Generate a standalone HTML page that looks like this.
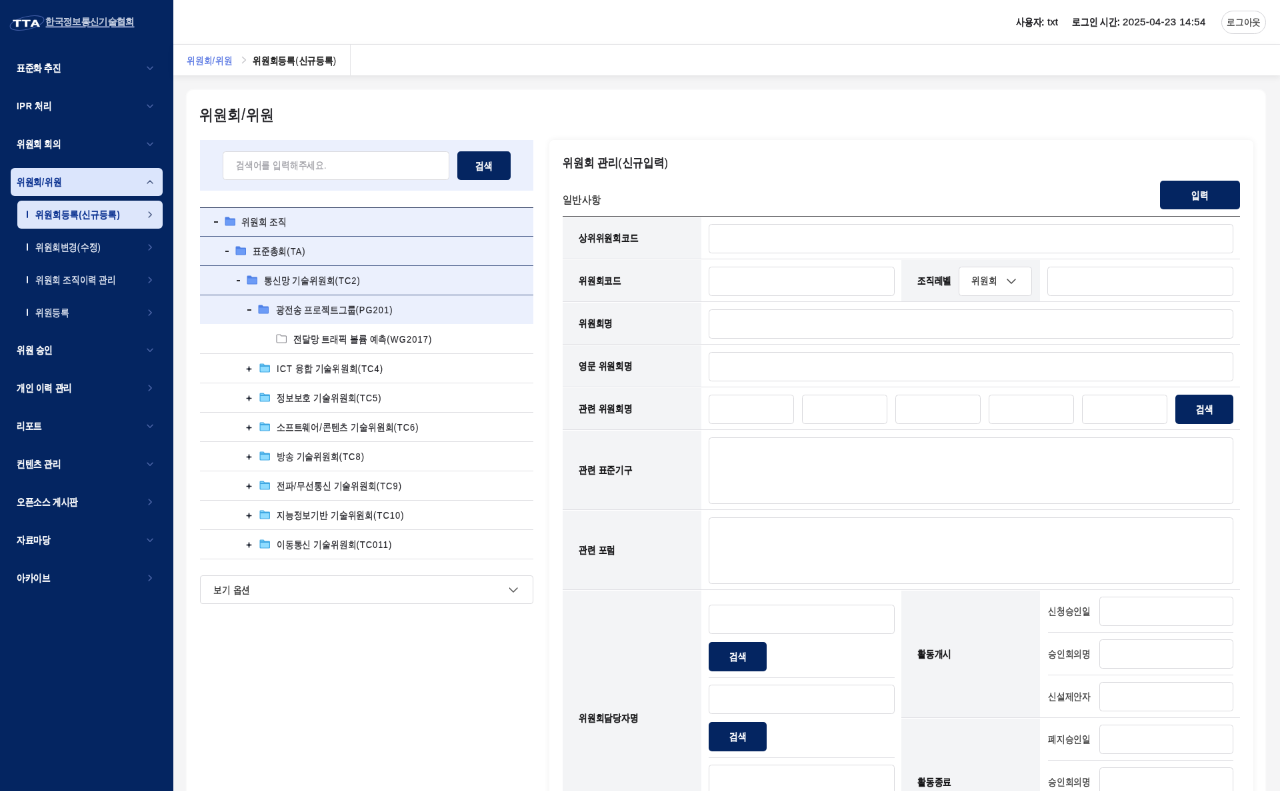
<!DOCTYPE html>
<html lang="ko">
<head>
<meta charset="utf-8">
<title>위원회/위원</title>
<style>
*{box-sizing:border-box;margin:0;padding:0}
html,body{width:1280px;height:791px;overflow:hidden;background:#f5f5f6}
body{font-family:"Liberation Sans",sans-serif;color:#1b1b1f;line-height:1}
i{font-style:normal;letter-spacing:1.3px;word-spacing:0;-webkit-text-stroke:.15px}
.mi i,.si.on i,.lb i{font-weight:bold;-webkit-text-stroke:0;letter-spacing:.9px}
#stage{will-change:transform;position:absolute;left:0;top:0;width:1920px;height:1187px;transform:scale(.666667);transform-origin:0 0;overflow:hidden;background:#f5f5f6;letter-spacing:0;word-spacing:.5px;font-size:15px;white-space:nowrap;-webkit-text-stroke:.3px}
#stage div,#stage span{position:absolute}
#stage span{display:block;white-space:nowrap;transform:scaleX(var(--sx,.855));transform-origin:0 0}
.k{display:inline-block;font-weight:inherit;transform:scaleX(var(--sx,.855));transform-origin:0 50%}
.btn .k,.pill .k{transform-origin:50% 50%}
#side{left:0;top:0;width:260px;height:1187px;background:#042561;color:#fff}
.mi{letter-spacing:-.3px;left:16px;width:228px;height:42px;border-radius:6px;line-height:42px;padding-left:9px;font-weight:normal;-webkit-text-stroke:.8px;font-size:15px;color:#fff}
.mi.on{background:#dbe5fc;color:#0c3391}
.mi svg,.si svg{position:absolute;right:13px;top:15px}
.si{letter-spacing:-.3px;left:26px;width:218px;height:42px;border-radius:6px;line-height:42px;padding-left:27px;font-size:15px;color:#eef2fb}
.si.on{background:#dde6fb;color:#0c3391;letter-spacing:.26px;font-weight:normal;-webkit-text-stroke:.8px}
.si:before{content:"";position:absolute;left:14.2px;top:15.5px;width:2px;height:11px;background:currentColor;border-radius:1px}
#top{left:260px;top:0;width:1660px;height:67px;background:#fff;border-bottom:1px solid #e4e4e7}
#crumb{left:260px;top:67px;width:1660px;height:46px;background:#fff;box-shadow:0 3px 9px rgba(0,0,0,.075)}
#crumb .tab{left:0;top:0;width:266px;height:46px;border-right:1px solid #e4e4e7}
#card{left:280px;top:135px;width:1617.5px;height:1100px;background:#fff;border-radius:10px;box-shadow:0 0 0 1.5px rgba(255,255,255,.55),0 1px 4px rgba(0,0,0,.04)}
.btn{background:#042561;color:#fff;font-weight:normal;-webkit-text-stroke:.8px;border-radius:5px;text-align:center;font-size:15px;text-indent:0}
.inp{background:#fff;border:1.4px solid #d9d9dd;border-radius:4.5px}
.tr{left:300px;width:500px;height:44px;border-bottom:1.2px solid #dedee2}
.tr.hl{background:#ebf0fd;border-bottom:1.5px solid #4b5f8c}
.tt{font-size:15px;line-height:44px;height:44px;top:0;color:#1f1f24}
#form{left:824px;top:210px;width:1056px;height:1000px;background:#fff;border-radius:7px;box-shadow:0 0 10px rgba(0,0,0,.07)}
.lc{background:#f3f4f6}
.lb{font-weight:normal;-webkit-text-stroke:.85px;font-size:14.5px;color:#141416}
.hr{height:1.3px;background:#e0e0e4}
</style>
</head>
<body>
<div id="stage">
<div id="side">
<svg style="position:absolute;left:0;top:0" width="260" height="66" viewBox="0 0 260 66"><ellipse cx="40.5" cy="34.5" rx="26" ry="9.5" fill="none" stroke="#3f5ba3" stroke-width="1.15" transform="rotate(-13 40.5 34.5)"/><g font-family="Liberation Sans, sans-serif" font-weight="bold" font-size="14" fill="#fff" stroke="#fff" stroke-width="0.5"><text x="19.5" y="39.8" textLength="12.5" lengthAdjust="spacingAndGlyphs">T</text><text x="33" y="39.8" textLength="12.5" lengthAdjust="spacingAndGlyphs">T</text><text x="45.5" y="39.8" textLength="14.5" lengthAdjust="spacingAndGlyphs">A</text></g><text x="68.5" y="37" font-family="Liberation Sans, sans-serif" font-size="13.5" fill="#dfe6f8" fill-opacity=".15" stroke="#eef2fc" stroke-width="0.62" textLength="133" lengthAdjust="spacingAndGlyphs">한국정보통신기술협회</text><rect x="68.5" y="39" width="60" height="2.6" fill="#b4c0e2" opacity=".6"/><rect x="131" y="39" width="33.5" height="2.6" fill="#b4c0e2" opacity=".6"/><rect x="167" y="39" width="34.5" height="2.6" fill="#b4c0e2" opacity=".6"/></svg>
<div class="mi" style="top:81px"><b class="k">표준화 추진</b><svg width="12" height="12" viewBox="0 0 12 12"><path d="M2 4.2 L6 8.2 L10 4.2" fill="none" stroke="#4d66a8" stroke-width="1.5" stroke-linecap="round" stroke-linejoin="round"/></svg></div>
<div class="mi" style="top:138px"><b class="k"><i>IPR</i> 처리</b><svg width="12" height="12" viewBox="0 0 12 12"><path d="M2 4.2 L6 8.2 L10 4.2" fill="none" stroke="#4d66a8" stroke-width="1.5" stroke-linecap="round" stroke-linejoin="round"/></svg></div>
<div class="mi" style="top:195px"><b class="k">위원회 회의</b><svg width="12" height="12" viewBox="0 0 12 12"><path d="M2 4.2 L6 8.2 L10 4.2" fill="none" stroke="#4d66a8" stroke-width="1.5" stroke-linecap="round" stroke-linejoin="round"/></svg></div>
<div class="mi on" style="top:252px"><b class="k">위원회<i>/</i>위원</b><svg width="12" height="12" viewBox="0 0 12 12"><path d="M2 8 L6 4 L10 8" fill="none" stroke="#4a5b84" stroke-width="1.5" stroke-linecap="round" stroke-linejoin="round"/></svg></div>
<div class="mi" style="top:504px"><b class="k">위원 승인</b><svg width="12" height="12" viewBox="0 0 12 12"><path d="M2 4.2 L6 8.2 L10 4.2" fill="none" stroke="#4d66a8" stroke-width="1.5" stroke-linecap="round" stroke-linejoin="round"/></svg></div>
<div class="mi" style="top:561px"><b class="k">개인 이력 관리</b><svg width="12" height="12" viewBox="0 0 12 12"><path d="M4.2 2 L8.2 6 L4.2 10" fill="none" stroke="#4d66a8" stroke-width="1.5" stroke-linecap="round" stroke-linejoin="round"/></svg></div>
<div class="mi" style="top:618px"><b class="k">리포트</b><svg width="12" height="12" viewBox="0 0 12 12"><path d="M2 4.2 L6 8.2 L10 4.2" fill="none" stroke="#4d66a8" stroke-width="1.5" stroke-linecap="round" stroke-linejoin="round"/></svg></div>
<div class="mi" style="top:675px"><b class="k">컨텐츠 관리</b><svg width="12" height="12" viewBox="0 0 12 12"><path d="M2 4.2 L6 8.2 L10 4.2" fill="none" stroke="#4d66a8" stroke-width="1.5" stroke-linecap="round" stroke-linejoin="round"/></svg></div>
<div class="mi" style="top:732px"><b class="k">오픈소스 게시판</b><svg width="12" height="12" viewBox="0 0 12 12"><path d="M4.2 2 L8.2 6 L4.2 10" fill="none" stroke="#4d66a8" stroke-width="1.5" stroke-linecap="round" stroke-linejoin="round"/></svg></div>
<div class="mi" style="top:789px"><b class="k">자료마당</b><svg width="12" height="12" viewBox="0 0 12 12"><path d="M2 4.2 L6 8.2 L10 4.2" fill="none" stroke="#4d66a8" stroke-width="1.5" stroke-linecap="round" stroke-linejoin="round"/></svg></div>
<div class="mi" style="top:846px"><b class="k">아카이브</b><svg width="12" height="12" viewBox="0 0 12 12"><path d="M4.2 2 L8.2 6 L4.2 10" fill="none" stroke="#4d66a8" stroke-width="1.5" stroke-linecap="round" stroke-linejoin="round"/></svg></div>
<div class="si on" style="top:300.5px"><b class="k">위원회등록<i>(</i>신규등록<i>)</i></b><svg width="12" height="12" viewBox="0 0 12 12"><path d="M4.2 2 L8.2 6 L4.2 10" fill="none" stroke="#4a5b84" stroke-width="1.5" stroke-linecap="round" stroke-linejoin="round"/></svg></div>
<div class="si" style="top:349.5px"><b class="k">위원회변경<i>(</i>수정<i>)</i></b><svg width="12" height="12" viewBox="0 0 12 12"><path d="M4.2 2 L8.2 6 L4.2 10" fill="none" stroke="#4d66a8" stroke-width="1.5" stroke-linecap="round" stroke-linejoin="round"/></svg></div>
<div class="si" style="top:398.5px"><b class="k">위원회 조직이력 관리</b><svg width="12" height="12" viewBox="0 0 12 12"><path d="M4.2 2 L8.2 6 L4.2 10" fill="none" stroke="#4d66a8" stroke-width="1.5" stroke-linecap="round" stroke-linejoin="round"/></svg></div>
<div class="si" style="top:447.5px"><b class="k">위원등록</b><svg width="12" height="12" viewBox="0 0 12 12"><path d="M4.2 2 L8.2 6 L4.2 10" fill="none" stroke="#4d66a8" stroke-width="1.5" stroke-linecap="round" stroke-linejoin="round"/></svg></div>
</div>
<div id="top">
<span style="left:1263.5px;top:25px;font-size:15px;font-weight:normal;-webkit-text-stroke:.8px">사용자:</span>
<span style="left:1311px;top:25px;font-size:15px;letter-spacing:0;--sx:1">txt</span>
<span style="left:1348px;top:25px;font-size:15px;font-weight:normal;-webkit-text-stroke:.8px">로그인 시간:</span>
<span style="left:1424px;top:25px;font-size:15px;letter-spacing:.36px;--sx:1">2025-04-23 14:54</span>
<div style="left:1571.5px;top:16px;width:67.5px;height:35px;border:1.2px solid #d2d2d6;border-radius:18px;font-size:14px;line-height:33px;text-align:center;color:#333;letter-spacing:.3px;--sx:.9" class="pill"><b class="k" style="font-weight:normal">로그아웃</b></div>
</div>
<div id="crumb"><div class="tab">
<span style="left:20px;top:16px;font-size:15px;color:#4a6be0">위원회<i>/</i>위원</span>
<svg style="position:absolute;left:100px;top:17px" width="12" height="12" viewBox="0 0 12 12"><path d="M3.5 1.5 L8.5 6 L3.5 10.5" fill="none" stroke="#c4c4c8" stroke-width="1.3" stroke-linecap="round" stroke-linejoin="round"/></svg>
<span style="left:119px;top:16px;font-size:15px;font-weight:normal;-webkit-text-stroke:.8px;color:#222">위원회등록<i>(</i>신규등록<i>)</i></span>
</div></div>
<div id="card"></div>
<span style="left:299px;top:161px;font-size:23px;letter-spacing:0;--sx:.915;-webkit-text-stroke:.75px;color:#1b1b1f">위원회<i>/</i>위원</span>
<div style="left:300px;top:210px;width:500px;height:76px;background:#ebf0fd"></div>
<div class="inp" style="left:334px;top:226.5px;width:339.5px;height:43.5px"></div>
<span style="left:354px;top:241px;font-size:14.5px;color:#9d9da3">검색어를 입력해주세요<i>.</i></span>
<div class="btn" style="left:685.5px;top:226.5px;width:80px;height:43.5px;line-height:43.5px"><b class="k">검색</b></div>
<div class="tr hl" style="top:311px">
<div style="left:21.0px;top:21.3px;width:5.6px;height:1.4px;background:#2a2a2e"></div>
<svg style="position:absolute;left:36.5px;top:14px" width="16.5" height="14" viewBox="0 0 16.5 14"><path d="M0.5 1.8 a1.3 1.3 0 0 1 1.3-1.3 h4.6 l1.6 1.9 h6.7 a1.3 1.3 0 0 1 1.3 1.3 v8.5 a1.3 1.3 0 0 1 -1.3 1.3 h-12.9 a1.3 1.3 0 0 1 -1.3 -1.3 z" fill="#4f80e6"/><path d="M1.5 4.6 h13.5 v7.1 a.8 .8 0 0 1 -.8 .8 h-11.9 a.8 .8 0 0 1 -.8 -.8 z" fill="#6c9bf6"/></svg>
<span class="tt" style="left:62.0px">위원회 조직</span>
</div>
<div class="tr hl" style="top:355px">
<div style="left:37.8px;top:21.3px;width:5.6px;height:1.4px;background:#2a2a2e"></div>
<svg style="position:absolute;left:53.3px;top:14px" width="16.5" height="14" viewBox="0 0 16.5 14"><path d="M0.5 1.8 a1.3 1.3 0 0 1 1.3-1.3 h4.6 l1.6 1.9 h6.7 a1.3 1.3 0 0 1 1.3 1.3 v8.5 a1.3 1.3 0 0 1 -1.3 1.3 h-12.9 a1.3 1.3 0 0 1 -1.3 -1.3 z" fill="#4f80e6"/><path d="M1.5 4.6 h13.5 v7.1 a.8 .8 0 0 1 -.8 .8 h-11.9 a.8 .8 0 0 1 -.8 -.8 z" fill="#6c9bf6"/></svg>
<span class="tt" style="left:79.2px">표준총회<i>(TA)</i></span>
</div>
<div class="tr hl" style="top:399px">
<div style="left:54.6px;top:21.3px;width:5.6px;height:1.4px;background:#2a2a2e"></div>
<svg style="position:absolute;left:70.1px;top:14px" width="16.5" height="14" viewBox="0 0 16.5 14"><path d="M0.5 1.8 a1.3 1.3 0 0 1 1.3-1.3 h4.6 l1.6 1.9 h6.7 a1.3 1.3 0 0 1 1.3 1.3 v8.5 a1.3 1.3 0 0 1 -1.3 1.3 h-12.9 a1.3 1.3 0 0 1 -1.3 -1.3 z" fill="#4f80e6"/><path d="M1.5 4.6 h13.5 v7.1 a.8 .8 0 0 1 -.8 .8 h-11.9 a.8 .8 0 0 1 -.8 -.8 z" fill="#6c9bf6"/></svg>
<span class="tt" style="left:96.4px">통신망 기술위원회<i>(TC2)</i></span>
</div>
<div class="tr hl" style="top:443px;border-bottom:none;height:42.8px">
<div style="left:71.4px;top:21.3px;width:5.6px;height:1.4px;background:#2a2a2e"></div>
<svg style="position:absolute;left:86.9px;top:14px" width="16.5" height="14" viewBox="0 0 16.5 14"><path d="M0.5 1.8 a1.3 1.3 0 0 1 1.3-1.3 h4.6 l1.6 1.9 h6.7 a1.3 1.3 0 0 1 1.3 1.3 v8.5 a1.3 1.3 0 0 1 -1.3 1.3 h-12.9 a1.3 1.3 0 0 1 -1.3 -1.3 z" fill="#4f80e6"/><path d="M1.5 4.6 h13.5 v7.1 a.8 .8 0 0 1 -.8 .8 h-11.9 a.8 .8 0 0 1 -.8 -.8 z" fill="#6c9bf6"/></svg>
<span class="tt" style="left:113.6px">광전송 프로젝트그룹<i>(PG201)</i></span>
</div>
<div class="tr" style="top:487px">
<svg style="position:absolute;left:113.5px;top:14px" width="16.5" height="14" viewBox="0 0 16.5 14"><path d="M1 2.2 a1.2 1.2 0 0 1 1.2-1.2 h4.2 l1.6 1.9 h6.3 a1.2 1.2 0 0 1 1.2 1.2 v7.7 a1.2 1.2 0 0 1 -1.2 1.2 h-12.1 a1.2 1.2 0 0 1 -1.2 -1.2 z" fill="#fff" stroke="#8e8e94" stroke-width="1.2"/></svg>
<span class="tt" style="left:140.0px">전달망 트래픽 볼륨 예측<i>(WG2017)</i></span>
</div>
<div class="tr" style="top:531px">
<svg style="position:absolute;left:69px;top:17.5px" width="9" height="9" viewBox="0 0 9 9"><path d="M4.5 0.3 L5.5 3.5 L8.7 4.5 L5.5 5.5 L4.5 8.7 L3.5 5.5 L0.3 4.5 L3.5 3.5 Z" fill="#1d2330"/><path d="M4.5 0.6 V8.4 M0.6 4.5 H8.4" stroke="#1d2330" stroke-width="1.5"/></svg>
<svg style="position:absolute;left:89.0px;top:14px" width="16.5" height="14" viewBox="0 0 16.5 14"><path d="M0.5 1.8 a1.3 1.3 0 0 1 1.3-1.3 h4.6 l1.6 1.9 h6.7 a1.3 1.3 0 0 1 1.3 1.3 v8.5 a1.3 1.3 0 0 1 -1.3 1.3 h-12.9 a1.3 1.3 0 0 1 -1.3 -1.3 z" fill="#3fa7e2"/><path d="M1.7 5 h13.1 v6.6 a.8 .8 0 0 1 -.8 .8 h-11.5 a.8 .8 0 0 1 -.8 -.8 z" fill="#8fdcff"/><path d="M1.7 1.7 h4.3 l1 1.2 h-5.3z" fill="#8fdcff"/></svg>
<span class="tt" style="left:115.0px"><i>ICT</i> 융합 기술위원회<i>(TC4)</i></span>
</div>
<div class="tr" style="top:575px">
<svg style="position:absolute;left:69px;top:17.5px" width="9" height="9" viewBox="0 0 9 9"><path d="M4.5 0.3 L5.5 3.5 L8.7 4.5 L5.5 5.5 L4.5 8.7 L3.5 5.5 L0.3 4.5 L3.5 3.5 Z" fill="#1d2330"/><path d="M4.5 0.6 V8.4 M0.6 4.5 H8.4" stroke="#1d2330" stroke-width="1.5"/></svg>
<svg style="position:absolute;left:89.0px;top:14px" width="16.5" height="14" viewBox="0 0 16.5 14"><path d="M0.5 1.8 a1.3 1.3 0 0 1 1.3-1.3 h4.6 l1.6 1.9 h6.7 a1.3 1.3 0 0 1 1.3 1.3 v8.5 a1.3 1.3 0 0 1 -1.3 1.3 h-12.9 a1.3 1.3 0 0 1 -1.3 -1.3 z" fill="#3fa7e2"/><path d="M1.7 5 h13.1 v6.6 a.8 .8 0 0 1 -.8 .8 h-11.5 a.8 .8 0 0 1 -.8 -.8 z" fill="#8fdcff"/><path d="M1.7 1.7 h4.3 l1 1.2 h-5.3z" fill="#8fdcff"/></svg>
<span class="tt" style="left:115.0px">정보보호 기술위원회<i>(TC5)</i></span>
</div>
<div class="tr" style="top:619px">
<svg style="position:absolute;left:69px;top:17.5px" width="9" height="9" viewBox="0 0 9 9"><path d="M4.5 0.3 L5.5 3.5 L8.7 4.5 L5.5 5.5 L4.5 8.7 L3.5 5.5 L0.3 4.5 L3.5 3.5 Z" fill="#1d2330"/><path d="M4.5 0.6 V8.4 M0.6 4.5 H8.4" stroke="#1d2330" stroke-width="1.5"/></svg>
<svg style="position:absolute;left:89.0px;top:14px" width="16.5" height="14" viewBox="0 0 16.5 14"><path d="M0.5 1.8 a1.3 1.3 0 0 1 1.3-1.3 h4.6 l1.6 1.9 h6.7 a1.3 1.3 0 0 1 1.3 1.3 v8.5 a1.3 1.3 0 0 1 -1.3 1.3 h-12.9 a1.3 1.3 0 0 1 -1.3 -1.3 z" fill="#3fa7e2"/><path d="M1.7 5 h13.1 v6.6 a.8 .8 0 0 1 -.8 .8 h-11.5 a.8 .8 0 0 1 -.8 -.8 z" fill="#8fdcff"/><path d="M1.7 1.7 h4.3 l1 1.2 h-5.3z" fill="#8fdcff"/></svg>
<span class="tt" style="left:115.0px">소프트웨어<i>/</i>콘텐츠 기술위원회<i>(TC6)</i></span>
</div>
<div class="tr" style="top:663px">
<svg style="position:absolute;left:69px;top:17.5px" width="9" height="9" viewBox="0 0 9 9"><path d="M4.5 0.3 L5.5 3.5 L8.7 4.5 L5.5 5.5 L4.5 8.7 L3.5 5.5 L0.3 4.5 L3.5 3.5 Z" fill="#1d2330"/><path d="M4.5 0.6 V8.4 M0.6 4.5 H8.4" stroke="#1d2330" stroke-width="1.5"/></svg>
<svg style="position:absolute;left:89.0px;top:14px" width="16.5" height="14" viewBox="0 0 16.5 14"><path d="M0.5 1.8 a1.3 1.3 0 0 1 1.3-1.3 h4.6 l1.6 1.9 h6.7 a1.3 1.3 0 0 1 1.3 1.3 v8.5 a1.3 1.3 0 0 1 -1.3 1.3 h-12.9 a1.3 1.3 0 0 1 -1.3 -1.3 z" fill="#3fa7e2"/><path d="M1.7 5 h13.1 v6.6 a.8 .8 0 0 1 -.8 .8 h-11.5 a.8 .8 0 0 1 -.8 -.8 z" fill="#8fdcff"/><path d="M1.7 1.7 h4.3 l1 1.2 h-5.3z" fill="#8fdcff"/></svg>
<span class="tt" style="left:115.0px">방송 기술위원회<i>(TC8)</i></span>
</div>
<div class="tr" style="top:707px">
<svg style="position:absolute;left:69px;top:17.5px" width="9" height="9" viewBox="0 0 9 9"><path d="M4.5 0.3 L5.5 3.5 L8.7 4.5 L5.5 5.5 L4.5 8.7 L3.5 5.5 L0.3 4.5 L3.5 3.5 Z" fill="#1d2330"/><path d="M4.5 0.6 V8.4 M0.6 4.5 H8.4" stroke="#1d2330" stroke-width="1.5"/></svg>
<svg style="position:absolute;left:89.0px;top:14px" width="16.5" height="14" viewBox="0 0 16.5 14"><path d="M0.5 1.8 a1.3 1.3 0 0 1 1.3-1.3 h4.6 l1.6 1.9 h6.7 a1.3 1.3 0 0 1 1.3 1.3 v8.5 a1.3 1.3 0 0 1 -1.3 1.3 h-12.9 a1.3 1.3 0 0 1 -1.3 -1.3 z" fill="#3fa7e2"/><path d="M1.7 5 h13.1 v6.6 a.8 .8 0 0 1 -.8 .8 h-11.5 a.8 .8 0 0 1 -.8 -.8 z" fill="#8fdcff"/><path d="M1.7 1.7 h4.3 l1 1.2 h-5.3z" fill="#8fdcff"/></svg>
<span class="tt" style="left:115.0px">전파<i>/</i>무선통신 기술위원회<i>(TC9)</i></span>
</div>
<div class="tr" style="top:751px">
<svg style="position:absolute;left:69px;top:17.5px" width="9" height="9" viewBox="0 0 9 9"><path d="M4.5 0.3 L5.5 3.5 L8.7 4.5 L5.5 5.5 L4.5 8.7 L3.5 5.5 L0.3 4.5 L3.5 3.5 Z" fill="#1d2330"/><path d="M4.5 0.6 V8.4 M0.6 4.5 H8.4" stroke="#1d2330" stroke-width="1.5"/></svg>
<svg style="position:absolute;left:89.0px;top:14px" width="16.5" height="14" viewBox="0 0 16.5 14"><path d="M0.5 1.8 a1.3 1.3 0 0 1 1.3-1.3 h4.6 l1.6 1.9 h6.7 a1.3 1.3 0 0 1 1.3 1.3 v8.5 a1.3 1.3 0 0 1 -1.3 1.3 h-12.9 a1.3 1.3 0 0 1 -1.3 -1.3 z" fill="#3fa7e2"/><path d="M1.7 5 h13.1 v6.6 a.8 .8 0 0 1 -.8 .8 h-11.5 a.8 .8 0 0 1 -.8 -.8 z" fill="#8fdcff"/><path d="M1.7 1.7 h4.3 l1 1.2 h-5.3z" fill="#8fdcff"/></svg>
<span class="tt" style="left:115.0px">지능정보기반 기술위원회<i>(TC10)</i></span>
</div>
<div class="tr" style="top:795px">
<svg style="position:absolute;left:69px;top:17.5px" width="9" height="9" viewBox="0 0 9 9"><path d="M4.5 0.3 L5.5 3.5 L8.7 4.5 L5.5 5.5 L4.5 8.7 L3.5 5.5 L0.3 4.5 L3.5 3.5 Z" fill="#1d2330"/><path d="M4.5 0.6 V8.4 M0.6 4.5 H8.4" stroke="#1d2330" stroke-width="1.5"/></svg>
<svg style="position:absolute;left:89.0px;top:14px" width="16.5" height="14" viewBox="0 0 16.5 14"><path d="M0.5 1.8 a1.3 1.3 0 0 1 1.3-1.3 h4.6 l1.6 1.9 h6.7 a1.3 1.3 0 0 1 1.3 1.3 v8.5 a1.3 1.3 0 0 1 -1.3 1.3 h-12.9 a1.3 1.3 0 0 1 -1.3 -1.3 z" fill="#3fa7e2"/><path d="M1.7 5 h13.1 v6.6 a.8 .8 0 0 1 -.8 .8 h-11.5 a.8 .8 0 0 1 -.8 -.8 z" fill="#8fdcff"/><path d="M1.7 1.7 h4.3 l1 1.2 h-5.3z" fill="#8fdcff"/></svg>
<span class="tt" style="left:115.0px">이동통신 기술위원회<i>(TC011)</i></span>
</div>
<div style="left:300px;top:310.6px;width:500px;height:1.5px;background:#2c3b60"></div>
<div class="inp" style="left:300px;top:863px;width:500px;height:43px;border-radius:4px"></div>
<span style="left:320px;top:877px;font-size:15px;color:#222">보기 옵션</span>
<svg style="position:absolute;left:762px;top:877px" width="16" height="16" viewBox="0 0 16 16"><path d="M2 5 L8 11 L14 5" fill="none" stroke="#555" stroke-width="1.5" stroke-linecap="round" stroke-linejoin="round"/></svg>
<div id="form"></div>
<span style="left:844px;top:236px;font-size:17.5px;font-weight:normal;-webkit-text-stroke:.8px;letter-spacing:0;--sx:.875;color:#1b1b1f">위원회 관리<i>(</i>신규입력<i>)</i></span>
<span style="left:844px;top:292px;font-size:15.5px;letter-spacing:0;--sx:.9;color:#222">일반사항</span>
<div class="btn" style="left:1740px;top:271px;width:119.5px;height:43px;line-height:43px"><b class="k">입력</b></div>
<div style="left:844px;top:324px;width:1016px;height:1.4px;background:#505055"></div>
<div class="lc" style="left:844px;top:326.1px;width:208px;height:62.5px"></div>
<span class="lb" style="left:868px;top:350.1px">상위위원회코드</span>
<div class="inp" style="left:1063px;top:335.6px;width:787px;height:44px"></div>
<div class="hr" style="left:844px;top:387.8px;width:1016px"></div>
<div class="lc" style="left:844px;top:389.6px;width:208px;height:63px"></div>
<span class="lb" style="left:868px;top:414.1px">위원회코드</span>
<div class="inp" style="left:1063px;top:399.6px;width:279px;height:44px"></div>
<div class="lc" style="left:1352px;top:389.6px;width:208px;height:63px"></div>
<span class="lb" style="left:1376px;top:414.1px">조직레벨</span>
<div class="inp" style="left:1438px;top:399.6px;width:110px;height:44px"></div>
<span style="left:1457px;top:414.1px;font-size:14.5px;color:#222">위원회</span>
<svg style="position:absolute;left:1509px;top:414.1px" width="16" height="16" viewBox="0 0 16 16"><path d="M2 5 L8 11 L14 5" fill="none" stroke="#444" stroke-width="1.5" stroke-linecap="round" stroke-linejoin="round"/></svg>
<div class="inp" style="left:1571px;top:399.6px;width:279px;height:44px"></div>
<div class="hr" style="left:844px;top:451.8px;width:1016px"></div>
<div class="lc" style="left:844px;top:453.6px;width:208px;height:63px"></div>
<span class="lb" style="left:868px;top:478.1px">위원회명</span>
<div class="inp" style="left:1063px;top:463.6px;width:787px;height:44px"></div>
<div class="hr" style="left:844px;top:515.8px;width:1016px"></div>
<div class="lc" style="left:844px;top:517.6px;width:208px;height:63px"></div>
<span class="lb" style="left:868px;top:542.1px">영문 위원회명</span>
<div class="inp" style="left:1063px;top:527.6px;width:787px;height:44px"></div>
<div class="hr" style="left:844px;top:579.8px;width:1016px"></div>
<div class="lc" style="left:844px;top:581.6px;width:208px;height:63px"></div>
<span class="lb" style="left:868px;top:606.1px">관련 위원회명</span>
<div class="inp" style="left:1063px;top:591.6px;width:128px;height:44px"></div>
<div class="inp" style="left:1203px;top:591.6px;width:128px;height:44px"></div>
<div class="inp" style="left:1343px;top:591.6px;width:128px;height:44px"></div>
<div class="inp" style="left:1483px;top:591.6px;width:128px;height:44px"></div>
<div class="inp" style="left:1623px;top:591.6px;width:128px;height:44px"></div>
<div class="btn" style="left:1763px;top:591.6px;width:87px;height:44px;line-height:44px"><b class="k">검색</b></div>
<div class="hr" style="left:844px;top:643.8px;width:1016px"></div>
<div class="lc" style="left:844px;top:645.6px;width:208px;height:119px"></div>
<span class="lb" style="left:868px;top:698.1px">관련 표준기구</span>
<div class="inp" style="left:1063px;top:655.6px;width:787px;height:100px"></div>
<div class="hr" style="left:844px;top:763.8px;width:1016px"></div>
<div class="lc" style="left:844px;top:765.6px;width:208px;height:119px"></div>
<span class="lb" style="left:868px;top:818.1px">관련 포럼</span>
<div class="inp" style="left:1063px;top:775.6px;width:787px;height:100px"></div>
<div class="hr" style="left:844px;top:883.8px;width:1016px"></div>
<div class="lc" style="left:844px;top:885.6px;width:208px;height:400px"></div>
<span class="lb" style="left:868px;top:1070.1px">위원회담당자명</span>
<div class="inp" style="left:1063px;top:906.8000000000001px;width:279px;height:44px"></div>
<div class="btn" style="left:1063px;top:962.8000000000001px;width:87px;height:44px;line-height:44px"><b class="k">검색</b></div>
<div class="hr" style="left:1063px;top:1016.0px;width:279px"></div>
<div class="inp" style="left:1063px;top:1026.8000000000002px;width:279px;height:44px"></div>
<div class="btn" style="left:1063px;top:1082.8000000000002px;width:87px;height:44px;line-height:44px"><b class="k">검색</b></div>
<div class="hr" style="left:1063px;top:1136.0px;width:279px"></div>
<div class="inp" style="left:1063px;top:1146.8000000000002px;width:279px;height:44px"></div>
<div class="btn" style="left:1063px;top:1202.8000000000002px;width:87px;height:44px;line-height:44px"><b class="k">검색</b></div>
<div class="hr" style="left:1063px;top:1256.0px;width:279px"></div>
<div class="lc" style="left:1352px;top:885.6px;width:208px;height:191px"></div>
<span class="lb" style="left:1376px;top:974.1px">활동개시</span>
<div class="hr" style="left:1352px;top:1075.8px;width:508px"></div>
<div class="lc" style="left:1352px;top:1077.6px;width:208px;height:192px"></div>
<span class="lb" style="left:1376px;top:1166.1px">활동종료</span>
<span style="left:1572px;top:910.1px;font-size:14.5px;color:#333">신청승인일</span>
<div class="inp" style="left:1649px;top:894.8000000000001px;width:201px;height:44px"></div>
<div class="hr" style="left:1572px;top:947.8px;width:278px"></div>
<span style="left:1572px;top:974.1px;font-size:14.5px;color:#333">승인회의명</span>
<div class="inp" style="left:1649px;top:958.8000000000001px;width:201px;height:44px"></div>
<div class="hr" style="left:1572px;top:1011.8px;width:278px"></div>
<span style="left:1572px;top:1038.1px;font-size:14.5px;color:#333">신설제안자</span>
<div class="inp" style="left:1649px;top:1022.8000000000001px;width:201px;height:44px"></div>
<span style="left:1572px;top:1102.1px;font-size:14.5px;color:#333">폐지승인일</span>
<div class="inp" style="left:1649px;top:1086.8px;width:201px;height:44px"></div>
<div class="hr" style="left:1572px;top:1139.8px;width:278px"></div>
<span style="left:1572px;top:1166.1px;font-size:14.5px;color:#333">승인회의명</span>
<div class="inp" style="left:1649px;top:1150.8px;width:201px;height:44px"></div>
<div class="hr" style="left:1572px;top:1203.8px;width:278px"></div>
<span style="left:1572px;top:1230.1px;font-size:14.5px;color:#333">폐지제안자</span>
<div class="inp" style="left:1649px;top:1214.8px;width:201px;height:44px"></div>
</div>
</body>
</html>
